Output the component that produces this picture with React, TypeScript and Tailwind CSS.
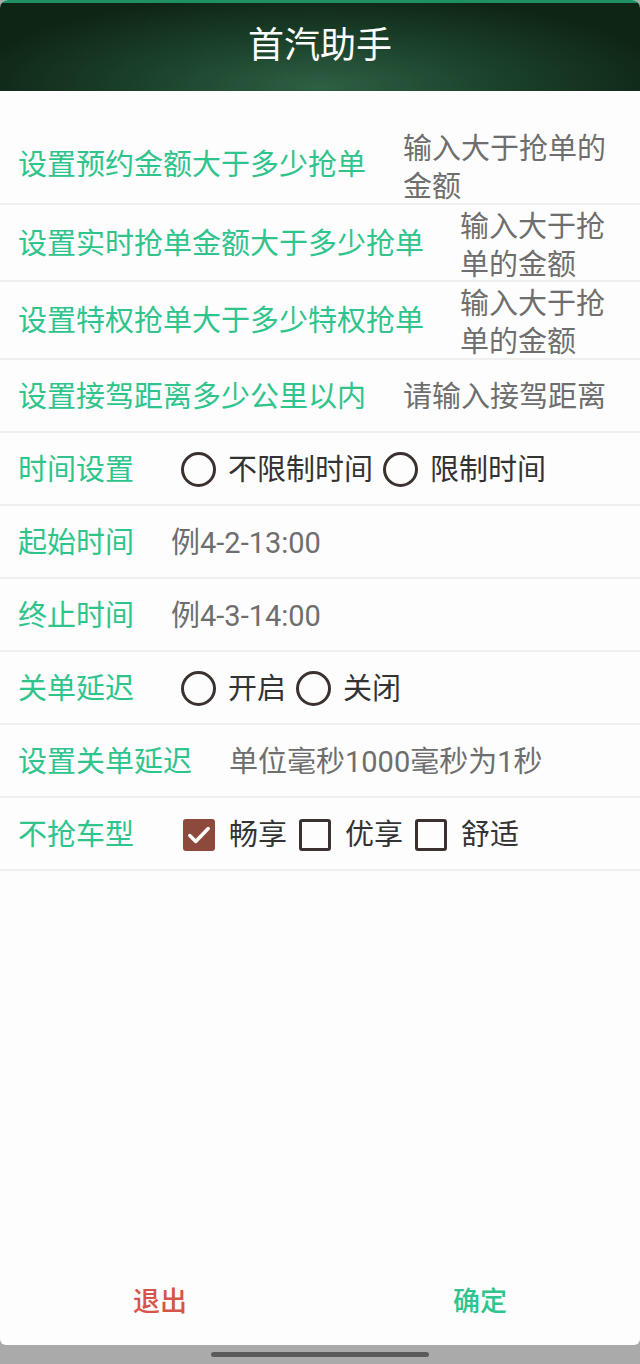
const LABEL = 'text-[#2fc48c] shrink-0'
const HINT = 'text-[#6e6e6e]'

function Row({ children, className = '' }: { children: React.ReactNode; className?: string }) {
  return (
    <div className={`flex items-center pl-[18px] pr-[20px] border-b-2 border-[#efefef] ${className}`}>
      {children}
    </div>
  )
}

function Radio({ text, first }: { text: string; first?: boolean }) {
  return (
    <div className={`flex items-center ${first ? 'ml-[47px]' : 'ml-[10px]'}`}>
      <span className="w-[35px] h-[35px] rounded-full border-[3px] border-[#3b3230] box-border" />
      <span className="ml-[12px] text-[#333333]">{text}</span>
    </div>
  )
}

function Check({ text, checked, first }: { text: string; checked?: boolean; first?: boolean }) {
  return (
    <div className={`flex items-center ${first ? 'ml-[49px]' : 'ml-[12px]'}`}>
      {checked ? (
        <span className="w-[32px] h-[32px] rounded-[3px] bg-[#8d4a3c] flex items-center justify-center">
          <svg width="26" height="26" viewBox="0 0 24 24" fill="none">
            <path d="M3.5 12.5l5.5 5.5L20.5 6" stroke="#ffffff" strokeWidth="3.2" strokeLinecap="round" strokeLinejoin="round" />
          </svg>
        </span>
      ) : (
        <span className="w-[32px] h-[32px] rounded-[3px] border-[3px] border-[#3b3230] box-border" />
      )}
      <span className="ml-[14px] text-[#333333]">{text}</span>
    </div>
  )
}

export default function App() {
  return (
    <div
      className="min-h-[1364px] bg-[#aaaaaa] flex flex-col text-[29px] leading-[38px]"
      style={{ fontFamily: 'Roboto, "Noto Sans CJK SC", "Noto Sans", sans-serif' }}
    >
      <div className="h-[1345px] flex flex-col bg-[#fdfdfd] rounded-t-[8px] rounded-b-[6px] overflow-hidden">
        <header className="h-[91px] shrink-0 border-t-[3px] border-[#1f9062] bg-[radial-gradient(ellipse_at_50%_95%,#2d6044_0%,#1b412a_40%,#0e2415_80%)] flex items-center justify-center">
          <h1 className="text-white text-[36px] leading-[44px] -mt-[2px]">首汽助手</h1>
        </header>

        <Row className="h-[114px] pt-[36px]">
          <span className={LABEL}>设置预约金额大于多少抢单</span>
          <span className={`${HINT} ml-[37px] mt-[5px]`}>输入大于抢单的金额</span>
        </Row>
        <Row className="h-[77px] pt-[2px]">
          <span className={LABEL}>设置实时抢单金额大于多少抢单</span>
          <span className={`${HINT} ml-[36px] mt-[4px]`}>输入大于抢单的金额</span>
        </Row>
        <Row className="h-[78px] pt-[2px]">
          <span className={LABEL}>设置特权抢单大于多少特权抢单</span>
          <span className={`${HINT} ml-[36px] mt-[4px]`}>输入大于抢单的金额</span>
        </Row>
        <Row className="h-[73px] pt-[2px]">
          <span className={LABEL}>设置接驾距离多少公里以内</span>
          <span className={`${HINT} ml-[37px]`}>请输入接驾距离</span>
        </Row>
        <Row className="h-[73px] pt-[2px]">
          <span className={LABEL}>时间设置</span>
          <Radio text="不限制时间" first />
          <Radio text="限制时间" />
        </Row>
        <Row className="h-[73px] pt-[2px]">
          <span className={LABEL}>起始时间</span>
          <span className={`${HINT} ml-[37px]`}>例4-2-13:00</span>
        </Row>
        <Row className="h-[73px] pt-[2px]">
          <span className={LABEL}>终止时间</span>
          <span className={`${HINT} ml-[37px]`}>例4-3-14:00</span>
        </Row>
        <Row className="h-[73px] pt-[2px]">
          <span className={LABEL}>关单延迟</span>
          <Radio text="开启" first />
          <Radio text="关闭" />
        </Row>
        <Row className="h-[73px] pt-[2px]">
          <span className={LABEL}>设置关单延迟</span>
          <span className={`${HINT} ml-[37px]`}>单位毫秒1000毫秒为1秒</span>
        </Row>
        <Row className="h-[73px] pt-[2px]">
          <span className={LABEL}>不抢车型</span>
          <Check text="畅享" checked first />
          <Check text="优享" />
          <Check text="舒适" />
        </Row>

        <div className="flex-1" />

        <div className="h-[86px] grid grid-cols-2 text-[27px] font-medium">
          <button className="text-[#d6544a] flex items-center justify-center">退出</button>
          <button className="text-[#2fc48c] flex items-center justify-center">确定</button>
        </div>
      </div>
      <div className="h-[19px] flex items-center justify-center">
        <span className="w-[218px] h-[5px] rounded-full bg-[#5a5a5a]" />
      </div>
    </div>
  )
}
